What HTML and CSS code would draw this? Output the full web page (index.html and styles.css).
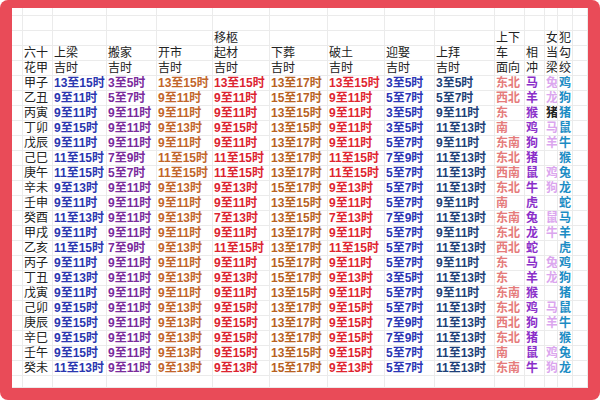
FILE: index.html
```html
<!DOCTYPE html>
<html lang="zh">
<head>
<meta charset="utf-8">
<title>六十花甲吉时表</title>
<link rel="stylesheet" href="styles.css">
</head>
<body>
<div class="frame">
  <div class="sheet">
    <table class="grid">
      <colgroup>
        <col class="w11"><col class="w30"><col class="w54"><col class="w50"><col class="w56"><col class="w57"><col class="w58"><col class="w57"><col class="w50"><col class="w60"><col class="w30"><col class="w20"><col class="w13"><col class="w15"><col class="w15">
      </colgroup>
      <tbody>
        <tr class="top"><td></td><td></td><td></td><td></td><td></td><td></td><td></td><td></td><td></td><td></td><td></td><td></td><td></td><td></td><td></td></tr>
        <tr><td></td><td></td><td></td><td></td><td></td><td></td><td></td><td></td><td></td><td></td><td></td><td></td><td></td><td></td><td></td></tr>
        <tr class="hd"><td></td><td></td><td></td><td></td><td></td><td>移柩</td><td></td><td></td><td></td><td></td><td>上下</td><td></td><td>女</td><td>犯</td><td></td></tr>
        <tr class="hd"><td></td><td>六十</td><td>上梁</td><td>搬家</td><td>开市</td><td>起材</td><td>下葬</td><td>破土</td><td>迎娶</td><td>上拜</td><td>车</td><td>相</td><td>当</td><td>勾</td><td></td></tr>
        <tr class="hd"><td></td><td>花甲</td><td>吉时</td><td>吉时</td><td>吉时</td><td>吉时</td><td>吉时</td><td>吉时</td><td>吉时</td><td>吉时</td><td>面向</td><td>冲</td><td>梁</td><td>绞</td><td></td></tr>
        <tr><td></td><td>甲子</td><td>13至15时</td><td>3至5时</td><td>13至15时</td><td>13至15时</td><td>13至17时</td><td>13至15时</td><td>3至5时</td><td>3至5时</td><td>东北</td><td>马</td><td>兔</td><td>鸡</td><td></td></tr>
        <tr><td></td><td>乙丑</td><td>9至11时</td><td>5至7时</td><td>9至11时</td><td>9至11时</td><td>15至17时</td><td>9至11时</td><td>5至7时</td><td>5至7时</td><td>西北</td><td>羊</td><td>龙</td><td>狗</td><td></td></tr>
        <tr><td></td><td>丙寅</td><td>9至11时</td><td>9至11时</td><td>9至11时</td><td>9至11时</td><td>13至15时</td><td>9至11时</td><td>3至5时</td><td>9至11时</td><td>东</td><td>猴</td><td class="k">猪</td><td>猪</td><td></td></tr>
        <tr><td></td><td>丁卯</td><td>9至15时</td><td>9至11时</td><td>9至13时</td><td>9至15时</td><td>13至15时</td><td>9至11时</td><td>3至5时</td><td>11至13时</td><td>南</td><td>鸡</td><td>马</td><td>鼠</td><td></td></tr>
        <tr><td></td><td>戊辰</td><td>9至11时</td><td>9至11时</td><td>9至11时</td><td>9至11时</td><td>13至17时</td><td>9至11时</td><td>5至7时</td><td>9至11时</td><td>东南</td><td>狗</td><td>羊</td><td>牛</td><td></td></tr>
        <tr><td></td><td>己巳</td><td>11至15时</td><td>7至9时</td><td>11至15时</td><td>11至15时</td><td>13至17时</td><td>11至15时</td><td>7至9时</td><td>11至13时</td><td>东北</td><td>猪</td><td></td><td>猴</td><td></td></tr>
        <tr><td></td><td>庚午</td><td>11至15时</td><td>5至7时</td><td>11至15时</td><td>11至15时</td><td>13至17时</td><td>11至15时</td><td>5至7时</td><td>11至13时</td><td>西南</td><td>鼠</td><td>鸡</td><td>兔</td><td></td></tr>
        <tr><td></td><td>辛未</td><td>9至13时</td><td>9至11时</td><td>9至13时</td><td>9至13时</td><td>15至17时</td><td>9至13时</td><td>5至7时</td><td>11至13时</td><td>东北</td><td>牛</td><td>狗</td><td>龙</td><td></td></tr>
        <tr><td></td><td>壬申</td><td>9至11时</td><td>9至11时</td><td>9至11时</td><td>9至11时</td><td>13至15时</td><td>9至11时</td><td>5至7时</td><td>9至11时</td><td>南</td><td>虎</td><td></td><td>蛇</td><td></td></tr>
        <tr><td></td><td>癸酉</td><td>11至13时</td><td>9至11时</td><td>9至13时</td><td>7至13时</td><td>13至15时</td><td>7至13时</td><td>7至9时</td><td>11至13时</td><td>东南</td><td>兔</td><td>鼠</td><td>马</td><td></td></tr>
        <tr><td></td><td>甲戌</td><td>9至11时</td><td>9至11时</td><td>9至11时</td><td>9至11时</td><td>13至17时</td><td>9至11时</td><td>5至7时</td><td>9至11时</td><td>东北</td><td>龙</td><td>牛</td><td>羊</td><td></td></tr>
        <tr><td></td><td>乙亥</td><td>11至15时</td><td>7至9时</td><td>9至13时</td><td>11至15时</td><td>13至17时</td><td>11至15时</td><td>5至7时</td><td>11至13时</td><td>西北</td><td>蛇</td><td></td><td>虎</td><td></td></tr>
        <tr><td></td><td>丙子</td><td>9至11时</td><td>9至11时</td><td>9至11时</td><td>9至11时</td><td>15至17时</td><td>9至11时</td><td>5至7时</td><td>9至11时</td><td>东</td><td>马</td><td>兔</td><td>鸡</td><td></td></tr>
        <tr><td></td><td>丁丑</td><td>9至13时</td><td>9至11时</td><td>9至13时</td><td>9至13时</td><td>15至17时</td><td>9至13时</td><td>3至5时</td><td>11至13时</td><td>东</td><td>羊</td><td>龙</td><td>狗</td><td></td></tr>
        <tr><td></td><td>戊寅</td><td>9至11时</td><td>9至11时</td><td>9至11时</td><td>9至11时</td><td>13至15时</td><td>9至11时</td><td>5至7时</td><td>9至11时</td><td>东南</td><td>猴</td><td></td><td>猪</td><td></td></tr>
        <tr><td></td><td>己卯</td><td>9至15时</td><td>9至11时</td><td>9至13时</td><td>9至15时</td><td>13至17时</td><td>9至15时</td><td>5至7时</td><td>11至13时</td><td>东北</td><td>鸡</td><td>马</td><td>鼠</td><td></td></tr>
        <tr><td></td><td>庚辰</td><td>9至15时</td><td>9至11时</td><td>9至13时</td><td>9至15时</td><td>13至17时</td><td>9至15时</td><td>7至9时</td><td>11至13时</td><td>西北</td><td>狗</td><td>羊</td><td>牛</td><td></td></tr>
        <tr><td></td><td>辛巳</td><td>9至15时</td><td>9至11时</td><td>9至13时</td><td>9至15时</td><td>13至17时</td><td>9至15时</td><td>7至9时</td><td>11至13时</td><td>东北</td><td>猪</td><td></td><td>猴</td><td></td></tr>
        <tr><td></td><td>壬午</td><td>9至15时</td><td>9至11时</td><td>9至13时</td><td>9至15时</td><td>13至15时</td><td>9至15时</td><td>5至7时</td><td>11至13时</td><td>南</td><td>鼠</td><td>鸡</td><td>兔</td><td></td></tr>
        <tr><td></td><td>癸未</td><td>11至13时</td><td>9至11时</td><td>9至13时</td><td>9至13时</td><td>15至17时</td><td>9至13时</td><td>5至7时</td><td>11至13时</td><td>东南</td><td>牛</td><td>狗</td><td>龙</td><td></td></tr>
        <tr class="bottom"><td></td><td></td><td></td><td></td><td></td><td></td><td></td><td></td><td></td><td></td><td></td><td></td><td></td><td></td><td></td></tr>
      </tbody>
    </table>
  </div>
</div>
</body>
</html>
```

FILE: styles.css
```css
html, body {
  margin: 0;
  padding: 0;
  background: #ffffff;
}

.frame {
  width: 600px;
  height: 400px;
  box-sizing: border-box;
  padding: 8px 12px 12px 12px;
  background: #e94b58;
  border-radius: 8px;
  overflow: hidden;
}

.sheet {
  width: 576px;
  height: 380px;
  background: #ffffff;
  overflow: hidden;
}

.grid {
  table-layout: fixed;
  width: 576px;
  border-collapse: separate;
  border-spacing: 0;
  font-family: "Liberation Sans", "Noto Sans CJK SC", sans-serif;
  font-size: 12px;
  font-weight: 700;
  color: #222222;
}

.w11 { width: 11px; }
.w13 { width: 13px; }
.w15 { width: 15px; }
.w20 { width: 20px; }
.w30 { width: 30px; }
.w50 { width: 50px; }
.w54 { width: 54px; }
.w56 { width: 56px; }
.w57 { width: 57px; }
.w58 { width: 58px; }
.w60 { width: 60px; }

.grid tr { height: 15px; }
.grid tr.top { height: 8px; }
.grid tr.bottom { height: 12px; }

.grid td {
  box-sizing: border-box;
  padding: 0 0 0 1px;
  line-height: 14px;
  white-space: nowrap;
  overflow: hidden;
  text-overflow: clip;
  border-right: 1px solid #ebebeb;
  border-bottom: 1px solid #ebebeb;
  vertical-align: middle;
}

.grid td:nth-child(2) { color: #222222; font-weight: 400; }
.grid td:nth-child(3) { color: #2a36b0; }
.grid td:nth-child(4) { color: #7a2b9c; }
.grid td:nth-child(5) { color: #c2652a; }
.grid td:nth-child(6) { color: #dc2330; }
.grid td:nth-child(7) { color: #b8621f; }
.grid td:nth-child(8) { color: #e02530; }
.grid td:nth-child(9) { color: #2a35b5; }
.grid td:nth-child(10) { color: #1d3f78; }
.grid td:nth-child(11) { color: #e57b7b; }
.grid td:nth-child(12) { color: #8b2fc9; }
.grid td:nth-child(13) { color: #dba6ee; }
.grid td:nth-child(14) { color: #1c8cc4; }
.grid td.k { color: #222222; }

.grid tr.hd td {
  color: #222222;
  font-weight: 400;
}
```
